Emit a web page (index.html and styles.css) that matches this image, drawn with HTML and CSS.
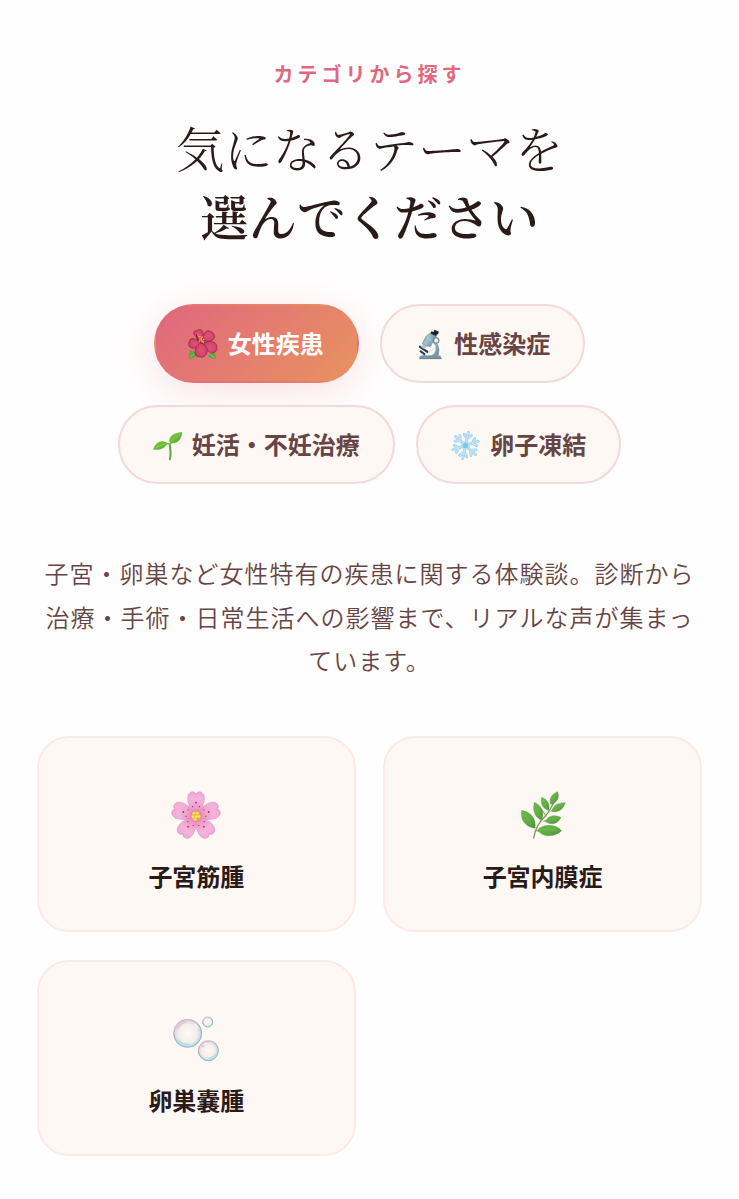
FILE: index.html
```
<!DOCTYPE html>
<html lang="ja">
<head>
    <meta charset="utf-8">
    <meta name="viewport" content="width=device-width, initial-scale=1">
    <title>カテゴリから探す</title>
    <link rel="stylesheet" href="styles.css">
</head>
<body>
<section class="categories">
    <p class="eyebrow">カテゴリから探す</p>
    <h2 class="title">気になるテーマを<br><strong>選んでください</strong></h2>

    <div class="tabs">
        <button class="tab active" type="button">
            <svg class="icon" viewBox="0 0 92 92">
                <defs>
                    <radialGradient id="hibiscus" cx=".5" cy=".5" r=".6">
                        <stop offset="0" stop-color="#e0527a"/>
                        <stop offset=".65" stop-color="#d3456d"/>
                        <stop offset="1" stop-color="#b23351"/>
                    </radialGradient>
                </defs>
                <path d="M3 64 C13 62 21 68 25 75 C21 87 10 90 2 87 Q5 76 3 64Z" fill="#58a843"/>
                <path d="M62 74 C72 69 81 71 82 76 C82 83 86 87 80 88 Q66 91 60 80Z" fill="#58a843"/>
                <path d="M5 84 L21 72 M66 77 L80 85" stroke="#a0d066" stroke-width="2"/>
                <g fill="url(#hibiscus)" stroke="#8c2a3f" stroke-width="2">
                    <path d="M37 32 C28 28 15 19 17 9 C19 4 25 7 27 4 C32 -1 42 1 43 8 C49 14 44 24 37 32Z"/>
                    <path d="M43 31 C44 17 51 4 63 5 C67 9 75 8 76 15 C84 25 73 35 66 36 C56 39 49 37 43 31Z"/>
                    <path d="M38 39 C28 34 16 25 8 30 C2 35 2 42 2 48 C7 57 16 59 23 56 C32 56 38 48 38 39Z"/>
                    <path d="M48 40 C57 36 71 36 78 40 C86 44 88 55 84 64 C78 74 67 72 61 67 C50 62 45 51 48 40Z"/>
                    <path d="M40 41 C52 48 60 58 56 71 C52 82 41 86 33 82 C23 83 18 73 22 64 C22 53 31 43 40 41Z"/>
                </g>
                <path d="M43 44 L38 37 L29 32 L25 16" stroke="#8f2038" stroke-width="5" fill="none"/>
                <path d="M42 38 L33 28 L27 13" stroke="#ef6e77" stroke-width="3" fill="none"/>
                <g fill="#e9b03d">
                    <circle cx="35" cy="22" r="2.5"/><circle cx="42" cy="24" r="2.5"/>
                    <circle cx="39" cy="29" r="3"/><circle cx="46" cy="31" r="2"/>
                    <circle cx="34" cy="35" r="2.5"/><circle cx="42" cy="38" r="2.5"/>
                </g>
            </svg>
            女性疾患
        </button>
        <button class="tab" type="button">
            <svg class="icon" viewBox="0 0 92 92">
                <defs>
                    <linearGradient id="steel" x2="1" y2=".5">
                        <stop offset="0" stop-color="#668496"/>
                        <stop offset=".45" stop-color="#a9c3d1"/>
                        <stop offset="1" stop-color="#7895a4"/>
                    </linearGradient>
                </defs>
                <path d="M28 77 Q48 82 57 75 Q66 67 64 51 L56 40 L64 36 Q79 52 74 74 L70 80 L30 82Z" fill="url(#steel)"/>
                <path d="M16 82 Q24 76 36 79 L78 79 L82 88 L15 88Z" fill="#7893a2"/>
                <path d="M16 88 L82 88" stroke="#526b7a" stroke-width="2"/>
                <path d="M16 48 L44 67 L40 72 L14 54Z" fill="#293642"/>
                <path d="M18 65 L33 76" stroke="#32434f" stroke-width="6"/>
                <path d="M26 46 L37 51 L31 60 L22 54Z" fill="#b3c5cf"/>
                <path d="M44 14 L64 25 L49 51 Q38 54 25 44 L35 23Z" fill="url(#steel)" stroke="#587487" stroke-width="1.5"/>
                <path d="M46 13 L55 8 L70 17 L65 25Z" fill="#708796"/>
                <path d="M51 7 L69 13 L65 20 L50 13Z M61 2 L74 8 L71 16 L58 9Z" fill="#17232e"/>
                <path d="M36 24 L51 34" stroke="#aec7d3" stroke-width="3"/>
                <circle cx="66" cy="34" r="8" fill="#e8eff1" stroke="#657d8a" stroke-width="3"/>
                <path d="M43 69 L61 57" stroke="#e1e9ec" stroke-width="5"/>
            </svg>
            性感染症
        </button>
        <button class="tab" type="button">
            <svg class="icon" viewBox="0 0 92 92">
                <defs>
                    <linearGradient id="sprout" x2="1" y2="1">
                        <stop offset="0" stop-color="#87cd3e"/>
                        <stop offset="1" stop-color="#4baa2c"/>
                    </linearGradient>
                </defs>
                <path d="M53 87 Q57 71 53 46" fill="none" stroke="#65a936" stroke-width="6" stroke-linecap="round"/>
                <path d="M22 49 Q38 36 53 42 L63 31" fill="none" stroke="#76bd3b" stroke-width="5"/>
                <path d="M4 57 C12 37 26 28 46 39 C38 53 22 61 4 57Z" fill="url(#sprout)" stroke="#4da532"/>
                <path d="M53 37 C49 19 63 10 89 7 C87 30 73 43 53 37Z" fill="url(#sprout)" stroke="#4da532"/>
                <path d="M11 53 Q26 45 43 40 M57 34 Q70 22 84 12" fill="none" stroke="#a6d861" stroke-width="2"/>
            </svg>
            妊活・不妊治療
        </button>
        <button class="tab" type="button">
            <svg class="icon" viewBox="0 0 92 92">
                <g transform="rotate(12 46 46)" fill="none" stroke-linecap="round" stroke-linejoin="round">
                    <g stroke="#8fc3de" stroke-width="8">
                        <path id="arm" d="M46 45 V6 M35 14 L46 25 L57 14"/>
                        <use href="#arm" transform="rotate(60 46 46)"/>
                        <use href="#arm" transform="rotate(120 46 46)"/>
                        <use href="#arm" transform="rotate(180 46 46)"/>
                        <use href="#arm" transform="rotate(240 46 46)"/>
                        <use href="#arm" transform="rotate(300 46 46)"/>
                    </g>
                    <g stroke="#bbe3f6" stroke-width="5.5">
                        <path id="ice" d="M46 45 V6 M35 14 L46 25 L57 14"/>
                        <use href="#ice" transform="rotate(60 46 46)"/>
                        <use href="#ice" transform="rotate(120 46 46)"/>
                        <use href="#ice" transform="rotate(180 46 46)"/>
                        <use href="#ice" transform="rotate(240 46 46)"/>
                        <use href="#ice" transform="rotate(300 46 46)"/>
                    </g>
                </g>
                <circle cx="46" cy="46" r="13" fill="#b5e1f6"/>
                <circle cx="46" cy="46" r="8" fill="#7fc6ec"/>
            </svg>
            卵子凍結
        </button>
    </div>

    <p class="description">子宮・卵巣など女性特有の疾患に関する体験談。診断から治療・手術・日常生活への影響まで、リアルな声が集まっています。</p>

    <div class="cards">
        <article class="card">
            <svg class="picture" viewBox="0 0 150 150">
                <defs>
                    <radialGradient id="blossom" gradientUnits="userSpaceOnUse" cx="75" cy="78" r="74">
                        <stop offset="0" stop-color="#e2568f"/>
                        <stop offset=".3" stop-color="#ef98c6"/>
                        <stop offset=".7" stop-color="#f5b3dc"/>
                        <stop offset="1" stop-color="#efa8d4"/>
                    </radialGradient>
                </defs>
                <g fill="url(#blossom)" stroke="#d187b4" stroke-width="1.5">
                    <path id="petal" d="M75 77 C62 66 49 42 50 23 C51 10 61 3 69 6 Q74 8 75 13 Q76 8 81 6 C89 3 99 10 100 23 C101 42 88 66 75 77Z"/>
                    <use href="#petal" transform="rotate(72 75 78)"/>
                    <use href="#petal" transform="rotate(144 75 78)"/>
                    <use href="#petal" transform="rotate(216 75 78)"/>
                    <use href="#petal" transform="rotate(288 75 78)"/>
                </g>
                <g fill="#723050">
                    <g id="anthers"><circle cx="75" cy="38" r="2.4"/><circle cx="65" cy="50" r="1.8"/><circle cx="85" cy="50" r="1.8"/></g>
                    <use href="#anthers" transform="rotate(72 75 78)"/>
                    <use href="#anthers" transform="rotate(144 75 78)"/>
                    <use href="#anthers" transform="rotate(216 75 78)"/>
                    <use href="#anthers" transform="rotate(288 75 78)"/>
                </g>
                <circle cx="75" cy="78" r="15" fill="#e0b040"/>
                <g fill="#f9e07c">
                    <circle cx="69" cy="70" r="4"/><circle cx="79" cy="70" r="4"/><circle cx="66" cy="80" r="4"/>
                    <circle cx="76" cy="80" r="4"/><circle cx="84" cy="79" r="4"/><circle cx="72" cy="88" r="4"/>
                </g>
            </svg>
            <h3>子宮筋腫</h3>
        </article>
        <article class="card">
            <svg class="picture" viewBox="0 0 150 150">
                <defs>
                    <linearGradient id="leaf" x2="1" y2="1">
                        <stop offset="0" stop-color="#6bb84c"/>
                        <stop offset=".5" stop-color="#62ae45"/>
                        <stop offset="1" stop-color="#46923a"/>
                    </linearGradient>
                </defs>
                <path d="M47 144 Q54 103 82 79 Q103 51 110 29" fill="none" stroke="#729c4c" stroke-width="4" stroke-linecap="round"/>
                <path d="M98 64 Q111 49 132 44 M76 94 Q95 88 106 87 M53 122 L75 124 M83 77 Q74 57 58 47 M52 113 L24 78" fill="none" stroke="#6b994a" stroke-width="3"/>
                <g fill="url(#leaf)" stroke="#4e963e">
                    <path d="M51 115 C22 110 6 91 11 61 C40 68 55 84 51 115Z"/>
                    <path d="M71 91 C49 81 43 61 49 37 C71 47 80 66 71 91Z"/>
                    <path d="M92 61 C73 56 66 40 71 22 C88 29 97 42 92 61Z"/>
                    <path d="M98 43 C91 28 101 12 119 5 C125 24 118 38 98 43Z"/>
                    <path d="M102 65 C102 49 119 37 142 38 C136 58 121 68 102 65Z"/>
                    <path d="M83 95 C88 78 109 71 129 83 C119 101 101 107 83 95Z"/>
                    <path d="M59 120 C76 100 113 102 131 122 C111 142 74 144 59 120Z"/>
                </g>
                <path d="M19 69 L45 107 M54 45 L68 83 M76 29 L89 55 M115 14 L103 37 M134 41 L108 60 M121 83 L92 93 M118 121 Q89 116 67 120" fill="none" stroke="#86bd66" stroke-width="1.2"/>
            </svg>
            <h3>子宮内膜症</h3>
        </article>
        <article class="card">
            <svg class="picture" viewBox="0 0 150 150">
                <defs>
                    <radialGradient id="film">
                        <stop offset="0" stop-color="#fffaf7"/>
                        <stop offset=".65" stop-color="#f5eee9"/>
                        <stop offset=".88" stop-color="#dcdde0"/>
                        <stop offset="1" stop-color="#b2c8d1"/>
                    </radialGradient>
                    <linearGradient id="rim" x2=".5" y2="1">
                        <stop offset="0" stop-color="#d5a4c1"/>
                        <stop offset=".25" stop-color="#dcb0c6"/>
                        <stop offset=".55" stop-color="#9badb9"/>
                        <stop offset="1" stop-color="#70c0d9"/>
                    </linearGradient>
                </defs>
                <g fill="url(#film)" stroke="url(#rim)">
                    <circle cx="50" cy="58" r="42" stroke-width="3"/>
                    <circle cx="112" cy="110" r="30" stroke-width="3"/>
                    <circle cx="110" cy="24" r="15" stroke-width="3"/>
                </g>
                <path d="M20 44 Q28 26 47 23 M94 100 Q99 88 111 87" fill="none" stroke="#efb9d4" stroke-width="7" opacity=".75"/>
                <path d="M22 78 Q35 93 55 92 M112 133 Q128 132 134 119" fill="none" stroke="#97deed" stroke-width="5" opacity=".7"/>
                <path d="M72 31 L79 41 M99 92 L108 88 M103 18 L108 15" stroke="#fff" stroke-width="4" stroke-linecap="round" fill="none"/>
            </svg>
            <h3>卵巣嚢腫</h3>
        </article>
    </div>
</section>
</body>
</html>
```
FILE: styles.css
```
:root {
    --rose: #e0677e;
    --orange: #e8935f;
    --cream: #fdf8f4;
    --blush: #f3d9db;
    --text: #2a1a1a;
    --text-soft: #684545;
}

* {
    box-sizing: border-box;
}

body {
    margin: 0;
    background-color: #fffefe;
    color: var(--text);
    font-family: "Noto Sans CJK JP", sans-serif;
}

.categories {
    padding: 56px 37px 42px;
    text-align: center;
}

.eyebrow {
    margin: 0 0 22px;
    color: var(--rose);
    font-size: 20px;
    font-weight: 700;
    letter-spacing: 4px;
    line-height: 35px;
}

.title {
    margin: 0 0 54.5px;
    font-family: "Noto Serif CJK JP", "Noto Serif JP", "Noto Sans CJK JP", serif;
    font-size: 48.4px;
    font-weight: 300;
    line-height: 68px;
}

.title strong {
    font-weight: 600;
}

.tabs {
    display: flex;
    flex-flow: row wrap;
    gap: 21.5px;
    justify-content: center;
    margin-bottom: 67px;
}

.tab {
    align-items: center;
    background-color: var(--cream);
    border: 2px solid var(--blush);
    border-radius: 50px;
    color: var(--text-soft);
    display: flex;
    font-family: inherit;
    font-size: 24px;
    font-weight: 700;
    gap: 9px;
    height: 79.5px;
    padding: 0 33px 2px 32px;
}

.tab.active {
    background: linear-gradient(135deg, var(--rose), var(--orange));
    border-color: transparent;
    box-shadow: 0 8px 40px rgba(224, 103, 126, .2);
    color: #fff;
}

.icon {
    height: 31px;
    margin-top: 4px;
    width: 31px;
}

.description {
    color: var(--text-soft);
    font-size: 24px;
    font-weight: 350;
    letter-spacing: 1px;
    line-height: 43.5px;
    margin: 0 0 54.5px;
}

.cards {
    display: grid;
    gap: 27.5px;
    grid-template-columns: 1fr 1fr;
}

.card {
    align-items: center;
    background-color: var(--cream);
    border: 2px solid #faebe8;
    border-radius: 32px;
    display: flex;
    flex-direction: column;
    height: 196px;
    padding-top: 52px;
}

.picture {
    height: 50px;
    width: 50px;
}

.card h3 {
    font-size: 24px;
    font-weight: 700;
    line-height: 36px;
    margin: 18px 0 0;
}
```
